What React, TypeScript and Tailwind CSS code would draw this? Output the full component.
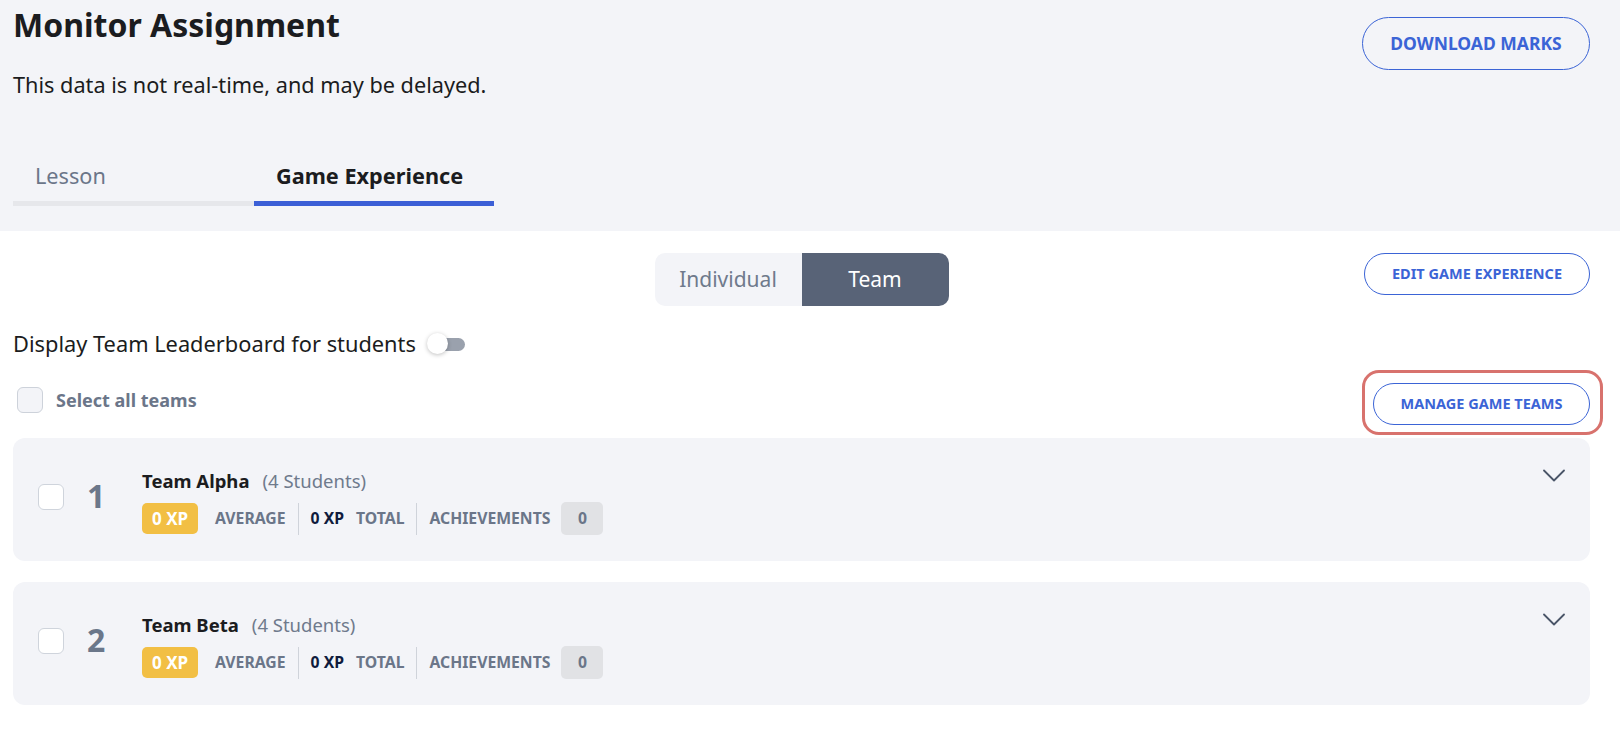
import { useState } from 'react'

interface Team {
  rank: number
  name: string
  students: number
}

const teams: Team[] = [
  { rank: 1, name: 'Team Alpha', students: 4 },
  { rank: 2, name: 'Team Beta', students: 4 },
]

function TeamCard({ team }: { team: Team }) {
  return (
    <div className="flex items-start rounded-[12px] bg-[#f3f4f8] h-[123px] pl-[25px] pr-[25px] pt-[31px]">
      <div className="flex flex-1 items-start">
        <div className="mt-[15px] w-[26px] h-[26px] rounded-[6px] border border-[#cfd4dc] bg-white" />
        <div className="ml-[23px] mt-[11px] w-[55px] text-[32px] font-bold text-[#6b778a] leading-[32px]">
          {team.rank}
        </div>
        <div className="flex flex-col">
          <div className="flex items-baseline text-[18.5px] leading-[24px]">
            <span className="font-bold text-[#1b1c20]">{team.name}</span>
            <span className="ml-[13px] text-[#6f7a8c]">({team.students} Students)</span>
          </div>
          <div className="mt-[9px] flex items-center h-[33px] text-[15.75px] font-bold uppercase text-[#6b7689]">
            <span className="flex items-center h-[31px] px-[10px] rounded-[5px] bg-[#f2bf44] text-[17px] text-white">0 XP</span>
            <span className="ml-[17px]">Average</span>
            <span className="ml-[12px] w-px h-[32px] bg-[#cfd3da]" />
            <span className="ml-[12px] text-[#0f1b3d]">0 XP</span>
            <span className="ml-[12px]">Total</span>
            <span className="ml-[12px] w-px h-[32px] bg-[#cfd3da]" />
            <span className="ml-[12px]">Achievements</span>
            <span className="ml-[11px] flex items-center justify-center w-[42px] h-[33px] rounded-[5px] bg-[#e1e2e5]">0</span>
          </div>
        </div>
      </div>
      <svg width="22" height="14" viewBox="0 0 22 14" className="text-[#4a5568]">
        <polyline points="1,1.5 11,11.5 21,1.5" fill="none" stroke="currentColor" strokeWidth="1.8" strokeLinecap="round" strokeLinejoin="round" />
      </svg>
    </div>
  )
}

export default function App() {
  const [mode, setMode] = useState<'individual' | 'team'>('team')
  const [showBoard, setShowBoard] = useState(false)

  return (
    <div className="min-h-[740px] bg-white text-[#1b1c20]" style={{ fontFamily: '"Noto Sans", "Open Sans", sans-serif' }}>
      {/* Header */}
      <div className="bg-[#f3f4f8] pl-[13px] pr-[30px] pt-[5px] pb-[25px]">
        <div className="flex items-start justify-between">
          <div>
            <h1 className="text-[32px] leading-[40px] font-bold">Monitor Assignment</h1>
            <p className="mt-[26px] text-[21.7px] leading-[28px]">This data is not real-time, and may be delayed.</p>
          </div>
          <button className="mt-[12px] h-[53px] w-[228px] rounded-full border border-[#3b64d6] text-[17.5px] font-bold uppercase text-[#3b64d6]">
            Download Marks
          </button>
        </div>
        <div className="mt-[63px] flex">
          <div className="w-[241px] border-b-[5px] border-[#e6e7eb] pl-[22px] pb-[11px] text-[21.7px] leading-[28px] text-[#6b7689]">
            Lesson
          </div>
          <div className="w-[240px] border-b-[5px] border-[#3b5fd6] pl-[22px] pb-[11px] text-[21.7px] leading-[28px] font-bold text-[#1b1c20]">
            Game Experience
          </div>
        </div>
      </div>

      {/* Body */}
      <div className="pl-[13px] pr-[30px] pt-[22px]">
        <div className="grid grid-cols-[1fr_auto_1fr] items-start">
          <div />
          <div className="flex rounded-[10px] overflow-hidden text-[21px]">
            <button
              onClick={() => setMode('individual')}
              className={mode === 'individual' ? 'w-[147px] h-[53px] bg-[#586377] text-white' : 'w-[147px] h-[53px] bg-[#f3f4f8] text-[#6f7a8c]'}
            >
              Individual
            </button>
            <button
              onClick={() => setMode('team')}
              className={mode === 'team' ? 'w-[147px] h-[53px] bg-[#586377] text-white' : 'w-[147px] h-[53px] bg-[#f3f4f8] text-[#6f7a8c]'}
            >
              Team
            </button>
          </div>
          <div className="flex justify-end">
            <button className="h-[42px] w-[226px] rounded-full border border-[#3b64d6] text-[14.5px] font-bold uppercase text-[#3b64d6]">
              Edit Game Experience
            </button>
          </div>
        </div>

        <div className="mt-[23px] flex items-center">
          <span className="text-[21.8px] leading-[30px]">Display Team Leaderboard for students</span>
          <button onClick={() => setShowBoard(!showBoard)} className="relative ml-[11px] w-[38px] h-[22px]">
            <span className="absolute left-[4px] right-0 top-[5px] h-[13px] rounded-full bg-[#9aa1ad]" />
            <span className={showBoard ? 'absolute right-0 top-0 w-[21px] h-[21px] rounded-full bg-white shadow-[0_1px_4px_rgba(0,0,0,0.25)]' : 'absolute left-0 top-0 w-[21px] h-[21px] rounded-full bg-white shadow-[0_1px_4px_rgba(0,0,0,0.25)]'} />
          </button>
        </div>

        <div className="mt-[24px] flex items-start justify-between">
          <div className="mt-[4px] flex items-center pl-[4px]">
            <div className="w-[26px] h-[26px] rounded-[6px] border border-[#cdd2da] bg-[#f3f4f8]" />
            <span className="ml-[13px] text-[18px] leading-[26px] font-bold text-[#6b7689]">Select all teams</span>
          </div>
          <div className="relative">
            <span className="absolute -left-[11px] -right-[13px] -top-[13px] -bottom-[10px] rounded-[17px] border-[3px] border-[#d8726d]" />
            <button className="h-[42px] w-[217px] rounded-full border border-[#3b64d6] text-[14.5px] font-bold uppercase text-[#3b64d6]">
              Manage Game Teams
            </button>
          </div>
        </div>

        <div className="mt-[13px] flex flex-col gap-[21px]">
          {teams.map((t) => (
            <TeamCard key={t.rank} team={t} />
          ))}
        </div>
      </div>
    </div>
  )
}
